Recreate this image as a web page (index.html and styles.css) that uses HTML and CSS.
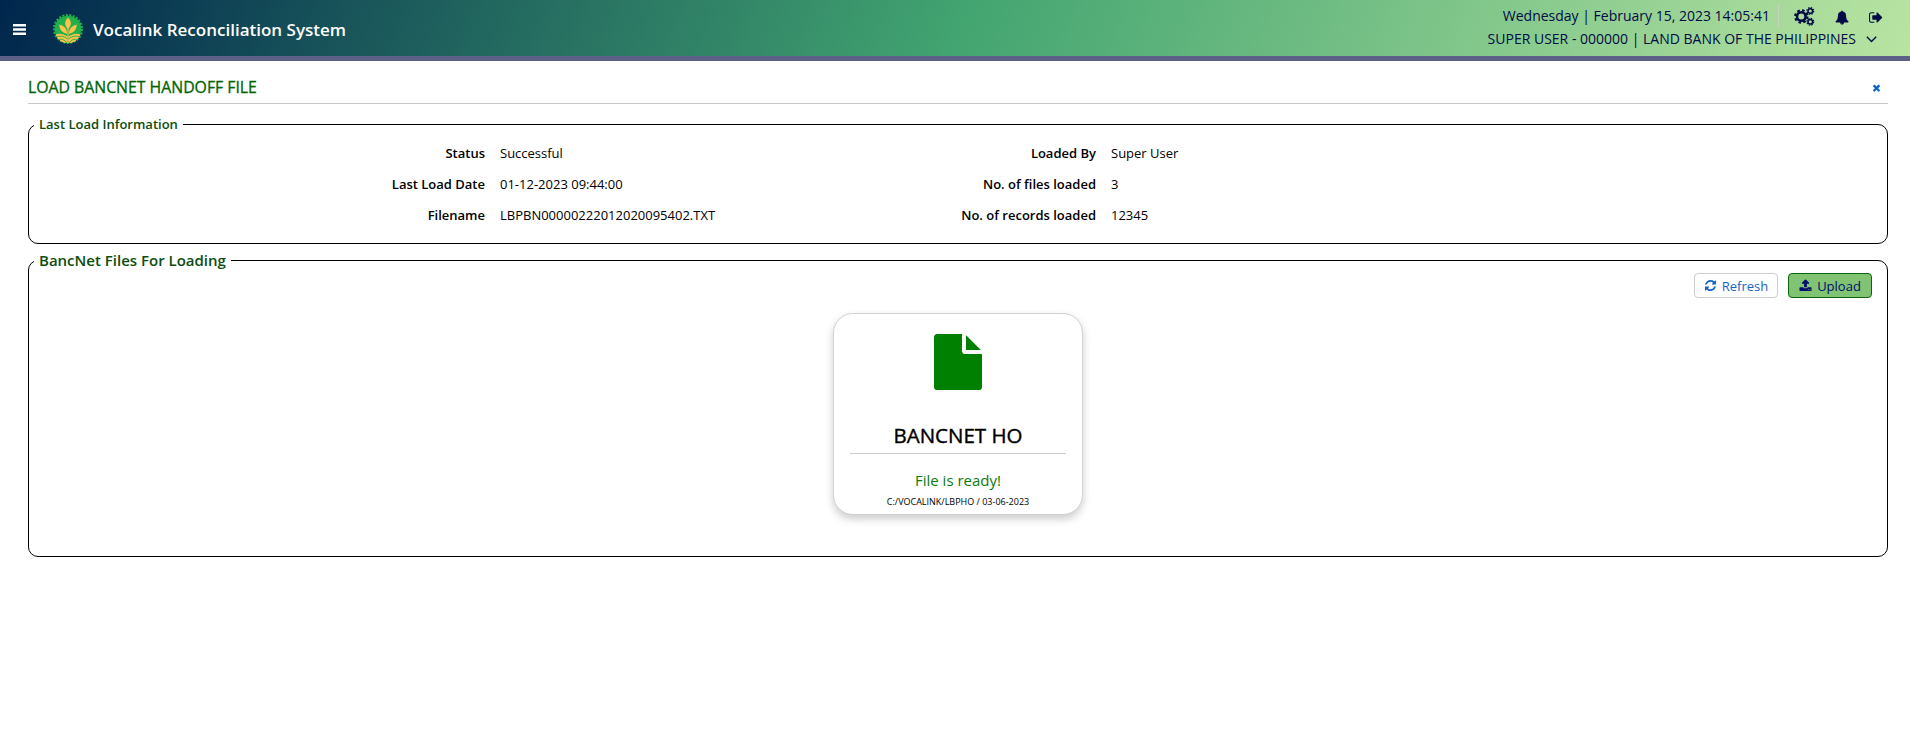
FILE: index.html
```html
<!DOCTYPE html>
<html lang="en">
<head>
<meta charset="utf-8">
<title>Vocalink Reconciliation System</title>
<link rel="stylesheet" href="styles.css">
</head>
<body>
<header class="topbar">
  <svg class="menu" viewBox="0 0 13 11"><path d="M0 0h13v2.4H0zM0 4.3h13v2.4H0zM0 8.6h13V11H0z"/></svg>
  <svg class="logo" viewBox="0 0 30 30">
    <circle cx="15" cy="15" r="13.3" fill="#22b04b"/>
    <circle cx="15" cy="15" r="14" fill="none" stroke="#22b04b" stroke-width="2" stroke-dasharray="2.1 1.418"/>
    <path d="M2.5 20.5Q9 18.5 14.5 22.5V29Q6 29 2.5 20.5ZM27.500 20.500Q21 18.500 15.500 22.500V29Q24 29 27.500 20.500Z" fill="#fcc24c"/>
    <path d="M2.500 23Q9 20.500 14.800 25M27.500 23Q21 20.500 15.200 25M5 26Q10 23.500 14 29M25 26Q20 23.500 16 29" fill="none" stroke="#22b04b" stroke-width=".9"/>
    <path d="M15 3.500Q21 9 15 15.500Q9 9 15 3.500ZM6.200 10.500Q14 12 14.300 20Q6.500 18.500 6.200 10.500ZM23.800 10.500Q16 12 15.700 20Q23.500 18.500 23.800 10.500Z" fill="#fcc24c"/>
    <path d="M15 14V29" stroke="#fcc24c" stroke-width="1"/>
  </svg>
  <h1 class="brand">Vocalink Reconciliation System</h1>
  <div class="session">
    <div class="session-top">
      <span class="clock">Wednesday | February 15, 2023 14:05:41</span>
      <span class="actions">
        <svg class="cogs" viewBox="0 0 21 19" fill="none" stroke="#000b45">
          <circle cx="7.300" cy="9.500" r="4.300" stroke-width="2.600"/>
          <circle cx="7.300" cy="9.500" r="6.200" stroke-width="2" stroke-dasharray="2.600 2.270"/>
          <circle cx="16.300" cy="4" r="2.300" stroke-width="1.500"/>
          <circle cx="16.300" cy="4" r="3.400" stroke-width="1.200" stroke-dasharray="1.500 1.170"/>
          <circle cx="16.300" cy="14.800" r="2.300" stroke-width="1.500"/>
          <circle cx="16.300" cy="14.800" r="3.400" stroke-width="1.200" stroke-dasharray="1.500 1.170"/>
        </svg>
        <svg class="bell" viewBox="0 0 1792 1792"><path d="M912 1696q0-16-16-16-59 0-101.500-42.500t-42.500-101.500q0-16-16-16t-16 16q0 73 51.500 124.500t124.500 51.500q16 0 16-16zm816-288q0 52-38 90t-90 38h-448q0 106-75 181t-181 75-181-75-75-181h-448q-52 0-90-38t-38-90q50-42 91-88t85-119.500 74.500-158.500 50-206 19.500-260q0-152 117-282.500t307-158.500q-8-19-8-39 0-40 28-68t68-28 68 28 28 68q0 20-8 39 190 28 307 158.500t117 282.500q0 139 19.500 260t50 206 74.500 158.500 85 119.500 91 88z"/></svg>
        <svg class="exit" viewBox="0 0 1664 1792"><path d="M640 1440q0 4 1 20t.5 26.500-3 23.500-10 19.500-20.500 6.500h-320q-119 0-203.500-84.500t-84.500-203.500v-704q0-119 84.500-203.500t203.500-84.500h320q13 0 22.500 9.500t9.500 22.500q0 4 1 20t.5 26.500-3 23.500-10 19.500-20.500 6.500h-320q-66 0-113 47t-47 113v704q0 66 47 113t113 47h312l11.500 1 11.500 3 8 5.500 7 9 2 13.500zm928-544q0 26-19 45l-544 544q-19 19-45 19t-45-19-19-45v-288h-448q-26 0-45-19t-19-45v-384q0-26 19-45t45-19h448v-288q0-26 19-45t45-19 45 19l544 544q19 19 19 45z"/></svg>
      </span>
    </div>
    <div class="session-user">
      <span class="user">SUPER USER - 000000 | LAND BANK OF THE PHILIPPINES</span>
      <svg class="chevron" viewBox="0 0 11 7"><path d="M.8.8 5.500 5.600 10.200.8" fill="none" stroke="#000b45" stroke-width="1.400"/></svg>
    </div>
  </div>
</header>
<main class="page">
  <div class="page-head">
    <h2 class="page-title">LOAD BANCNET HANDOFF FILE</h2>
    <svg class="close" viewBox="302 302 1188 1252"><path d="M1490 1322q0 40-28 68l-136 136q-28 28-68 28t-68-28l-294-294-294 294q-28 28-68 28t-68-28l-136-136q-28-28-28-68t28-68l294-294-294-294q-28-28-28-68t28-68l136-136q28-28 68-28t68 28l294 294 294-294q28-28 68-28t68 28l136 136q28 28 28 68t-28 68l-294 294 294 294q28 28 28 68z"/></svg>
  </div>
  <fieldset class="panel info">
    <legend class="info-legend">Last Load Information</legend>
    <dl class="info-grid">
      <dt>Status</dt><dd>Successful</dd><dt>Loaded By</dt><dd>Super User</dd>
      <dt>Last Load Date</dt><dd>01-12-2023 09:44:00</dd><dt>No. of files loaded</dt><dd>3</dd>
      <dt>Filename</dt><dd>LBPBN00000222012020095402.TXT</dd><dt>No. of records loaded</dt><dd>12345</dd>
    </dl>
  </fieldset>
  <fieldset class="panel files">
    <legend class="files-legend">BancNet Files For Loading</legend>
    <div class="toolbar">
      <button class="btn"><svg viewBox="0 0 1792 1792"><path d="M1639 1056q0 5-1 7-64 268-268 434.500t-478 166.500q-146 0-282.500-55t-243.500-157l-129 129q-19 19-45 19t-45-19-19-45v-448q0-26 19-45t45-19h448q26 0 45 19t19 45-19 45l-137 137q71 66 161 102t187 36q134 0 250-65t186-179q11-17 53-117 8-23 30-23h192q13 0 22.500 9.500t9.500 22.500zm25-800v448q0 26-19 45t-45 19h-448q-26 0-45-19t-19-45 19-45l138-138q-148-137-349-137-134 0-250 65t-186 179q-11 17-53 117-8 23-30 23h-199q-13 0-22.500-9.500t-9.500-22.500v-7q65-268 270-434.500t480-166.500q146 0 284 55.500t245 156.500l130-129q19-19 45-19t45 19 19 45z"/></svg><span>Refresh</span></button>
      <button class="btn btn-primary"><svg viewBox="0 0 1792 1792"><path d="M1344 1472q0-26-19-45t-45-19-45 19-19 45 19 45 45 19 45-19 19-45zm256 0q0-26-19-45t-45-19-45 19-19 45 19 45 45 19 45-19 19-45zm128-224v320q0 40-28 68t-68 28h-1472q-40 0-68-28t-28-68v-320q0-40 28-68t68-28h427q21 56 70.500 92t110.500 36h256q61 0 110.500-36t70.500-92h427q40 0 68 28t28 68zm-325-648q-17 40-59 40h-256v448q0 26-19 45t-45 19h-256q-26 0-45-19t-19-45v-448h-256q-42 0-59-40-17-39 14-69l448-448q18-19 45-19t45 19l448 448q31 30 14 69z"/></svg><span>Upload</span></button>
    </div>
    <article class="card">
      <svg class="file" viewBox="0 0 1536 1792"><path d="M1024 512V40q22 14 36 28l408 408q14 14 28 36h-472zm-128 32q0 40 28 68t68 28h544v1056q0 40-28 68t-68 28H96q-40 0-68-28t-28-68V96Q0 56 28 28T96 0h800v544z"/></svg>
      <h3 class="card-title">BANCNET HO</h3>
      <p class="card-state">File is ready!</p>
      <p class="card-path">C:/VOCALINK/LBPHO / 03-06-2023</p>
    </article>
  </fieldset>
</main>
</body>
</html>
```
FILE: styles.css
```css
* { box-sizing: border-box; margin: 0; padding: 0; }
body { background: #fff; color: #000; font-family: "Open Sans", sans-serif; font-size: 13px; }
svg { display: block; flex: none; }

.topbar {
  display: flex; align-items: center; height: 61px; padding: 0 27px 0 13px;
  border-bottom: 5px solid #5c6087;
  background: linear-gradient(110deg, #00264d 0%, #42a470 50%, #b9e4a2 100%) border-box;
}
.menu { width: 13px; height: 11px; margin-top: 3px; fill: #fff; }
.logo { width: 30px; height: 30px; margin: 2px 10px 0 27px; }
.brand { margin-top: 3px; font-size: 17px; font-weight: 600; color: #fff; }
.session { margin-left: auto; align-self: stretch; color: #000b45; font-size: 14px; }
.session-top, .session-user { display: flex; align-items: center; justify-content: flex-end; }
.session-top { height: 23px; margin-top: 4px; }
.session-user { height: 24px; margin-top: -1px; padding-right: 1px; }
.actions { display: flex; align-items: center; height: 23px; margin-left: 8px; padding-left: 15px; border-left: 1px solid #c4d4bf; }
.actions svg { fill: #000b45; }
.actions .cogs { width: 21px; height: 19px; fill: none; margin-top: 1px; }
.bell { width: 14px; height: 15px; margin: 4px 20px 0 20px; }
.exit { width: 14px; height: 15px; margin-top: 4px; }
.chevron { width: 11px; height: 7px; margin: 2px 5px 0 10px; }

.page { padding: 0 22px 0 28px; }
.page-head { display: flex; align-items: center; justify-content: space-between; height: 43px; padding: 10px 8px 0 0; border-bottom: 1px solid #c8c8c8; }
.page-title { font-size: 15.800px; font-weight: 400; color: #006400; -webkit-text-stroke: .3px #006400; }
.close { width: 7px; height: 8px; margin-top: 2px; fill: #0b63ce; }

.panel { border: 1px solid #000; border-radius: 10px; }
.panel legend { margin-left: 5px; padding: 0 5px; color: #0d4d0d; font-weight: 600; }
.info { height: 128px; margin-top: 12px; }
.info-legend { height: 17px; line-height: 17px; font-size: 13px; }
.info-grid { display: grid; grid-template-columns: 456px 154px 457px 1fr; grid-auto-rows: 31px; padding-top: 5px; line-height: 31px; }
.info-grid dt { text-align: right; font-weight: 600; }
.info-grid dd { padding-left: 15px; white-space: nowrap; }
.files { height: 306px; margin-top: 7px; }
.files-legend { height: 19px; line-height: 19px; font-size: 15px; }

.toolbar { display: flex; justify-content: flex-end; gap: 10px; padding: 3px 15px 0 0; }
.btn {
  display: flex; align-items: center; justify-content: center; gap: 5px; width: 84px; height: 25px;
  border: 1px solid #ccc; border-radius: 4px; background: #fff;
  color: #1565c8; font: 13px "Open Sans", sans-serif;
}
.btn svg { width: 13px; height: 13px; fill: currentColor; }
.btn-primary { border-color: #0d640d; background: #80c373; color: #000b6e; }

.card {
  display: flex; flex-direction: column; align-items: center; width: 250px; height: 202px; margin: 15px auto 0; padding: 20px 16px 0;
  border: 1px solid #d3d3d3; border-radius: 20px; background: #fff; box-shadow: 0 4px 8px rgba(0, 0, 0, .2);
}
.file { width: 48px; height: 56px; fill: #008000; }
.card-title { width: 216px; height: 44px; margin-top: 20px; padding-top: 12px; border-bottom: 1px solid #ccc; text-align: center; font-size: 20.500px; font-weight: 400; line-height: 26px; -webkit-text-stroke: .4px #000; }
.card-state { margin-top: 16px; color: #0a7a0a; font-size: 15px; line-height: 20px; }
.card-path { margin-top: 6px; font-size: 9px; line-height: 12px; }
```
